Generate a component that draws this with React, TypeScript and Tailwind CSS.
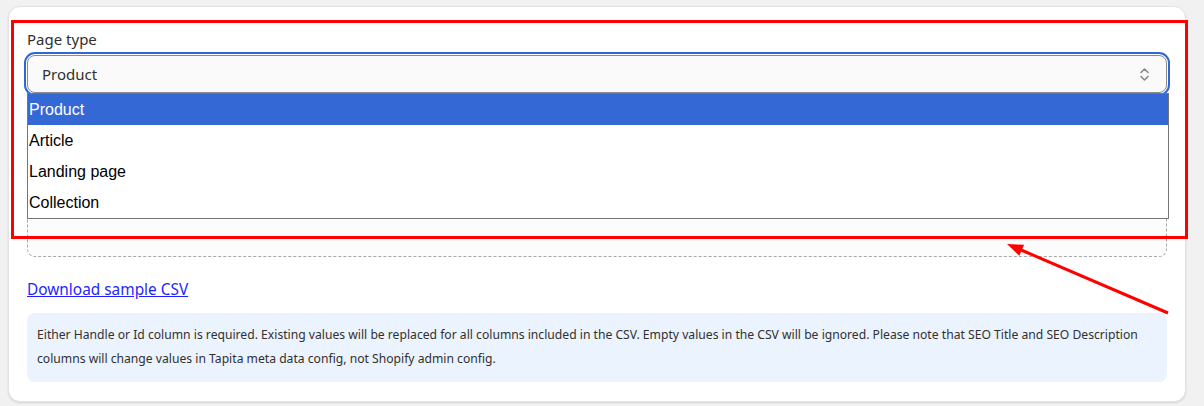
const ui = { fontFamily: '"Noto Sans", "Open Sans", sans-serif' };
const native = { fontFamily: '"Liberation Sans", Arial, sans-serif' };

const options = ['Product', 'Article', 'Landing page', 'Collection'];

function UpDownIcon() {
  return (
    <svg width="11" height="15" viewBox="0 0 11 15" fill="none" stroke="#8a8a8a" strokeWidth="1.6" strokeLinecap="round" strokeLinejoin="round">
      <path d="M2 5.5 L5.5 2 L9 5.5" />
      <path d="M2 9.5 L5.5 13 L9 9.5" />
    </svg>
  );
}

export default function App() {
  return (
    <div className="relative w-[1204px] h-[406px] overflow-hidden bg-[#f1f1f1] pl-[8px] pt-[6px]" style={ui}>
      <div className="w-[1178px] h-[396px] rounded-[12px] border border-[#e3e3e3] bg-white px-[18px] pt-[22px] shadow-[0_1px_2px_rgba(0,0,0,0.12)]">
        <div className="text-[15px] leading-5 text-[#303030]">Page type</div>

        <div className="relative mt-[6px]">
          <div className="flex h-[38px] items-center justify-between rounded-[8px] border border-[#8a8a8a] bg-[#fafafa] pl-[14px] pr-[16px] outline-2 outline-offset-1 outline-[#3067d6] outline">
            <span className="text-[15px] text-[#303030]">Product</span>
            <UpDownIcon />
          </div>

          <ul className="absolute left-0 top-[38px] z-10 w-[1142px] border border-[#767676] bg-white" style={native}>
            {options.map((o, i) => (
              <li
                key={o}
                className={
                  i === 0
                    ? 'h-[31px] pl-[1px] text-[16px] leading-[31px] bg-[#3469d5] text-white'
                    : 'h-[31px] pl-[1px] text-[16px] leading-[31px] text-black'
                }
              >
                {o}
              </li>
            ))}
          </ul>

          <div className="mt-[8px] h-[156px] rounded-[8px] border border-dashed border-[#a8a8a8] bg-[#fcfcfc]" />
        </div>

        <a href="#" className="mt-[23px] block w-fit text-[15.4px] leading-5 text-[#1f1fff] underline">
          Download sample CSV
        </a>

        <div className="mt-[13px] rounded-[8px] bg-[#ebf3fe] pl-[10px] pr-[10px] pt-[10px] pb-[11px] text-[12.15px] leading-6 text-[#303030]">
          Either Handle or Id column is required. Existing values will be replaced for all columns included in the CSV. Empty values in the CSV will be ignored. Please note that SEO Title and SEO Description columns will change values in Tapita meta data config, not Shopify admin config.
        </div>
      </div>

      <div className="pointer-events-none absolute left-[11px] top-[20px] h-[219px] w-[1177px] border-[3px] border-[#ff0000]" />

      <svg className="pointer-events-none absolute left-0 top-0" width="1204" height="406">
        <line x1="1168" y1="313" x2="1020" y2="249.5" stroke="#ff0000" strokeWidth="3" />
        <polygon points="1007,244 1024.1,244.8 1019.3,255.8" fill="#ff0000" />
      </svg>
    </div>
  );
}
